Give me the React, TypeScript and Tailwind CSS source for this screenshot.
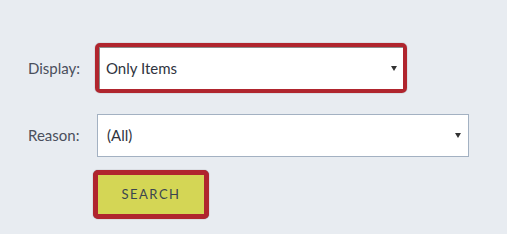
import React from 'react';

const Arrow: React.FC = () => (
  <svg width="6" height="5" viewBox="0 0 6 5" className="shrink-0">
    <path d="M0 0 L6 0 L3 5 Z" fill="#333" />
  </svg>
);

const App: React.FC = () => {
  return (
    <div
      className="w-[507px] h-[234px] bg-[#e8ecf1] pt-[43px] pl-[28px] text-[#4a4f5c]"
      style={{ fontFamily: 'Lato, "Open Sans", sans-serif' }}
    >
      <div className="flex items-center h-[50px]">
        <label className="w-[67px] text-[15px]">Display:</label>
        <div className="w-[312px] h-[50px] border-[4px] border-[#b0252e] rounded-[5px] shadow-[0_0_1px_#666]">
          <div className="h-full bg-white border-t border-l border-[#8c8c8c] flex items-center justify-between pl-[6px] pr-[6px] text-[15px] text-[#2f3440]">
            <span>Only Items</span>
            <Arrow />
          </div>
        </div>
      </div>

      <div className="flex items-center h-[43px] mt-[21px]">
        <label className="w-[69px] text-[15px]">Reason:</label>
        <div className="w-[372px] h-[43px] bg-white border border-[#a3b1c2] flex items-center justify-between pl-[9px] pr-[7px] text-[15px] text-[#2f3440]">
          <span>(All)</span>
          <Arrow />
        </div>
      </div>

      <div className="mt-[13px] ml-[65px]">
        <button className="w-[116px] h-[49px] border-[5px] border-[#b0252e] rounded-[5px] bg-[#d4d655] text-[13px] tracking-[1.5px] text-[#3b4550] shadow-[0_0_1px_#666]">
          SEARCH
        </button>
      </div>
    </div>
  );
};

export default App;
